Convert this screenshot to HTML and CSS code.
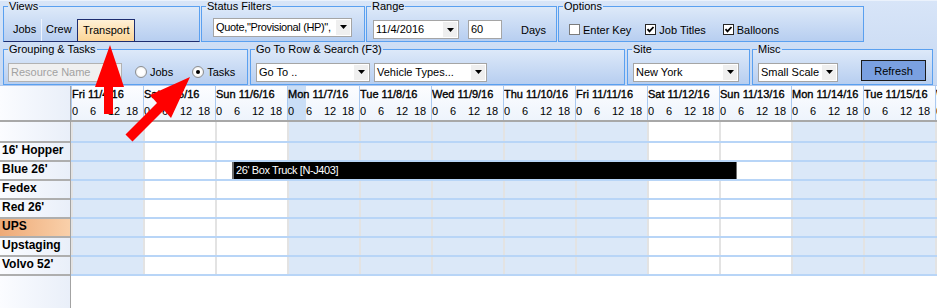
FILE: index.html
```html
<!DOCTYPE html>
<html lang="en">
<head>
  <meta charset="UTF-8">
  <title>Transport Schedule</title>
  <link rel="stylesheet" href="styles.css">
</head>
<body>

  <!-- Filter toolbar -->
  <div class="toolbar">
    <div class="bar-row top">
      <fieldset class="grp views">
        <legend>Views</legend>
        <div class="tabs">
          <span class="tab">Jobs</span>
          <span class="tab">Crew</span>
          <span class="tab active">Transport</span>
        </div>
      </fieldset>

      <fieldset class="grp status">
        <legend>Status Filters</legend>
        <div class="combo status-combo">
          <span class="val">Quote,"Provisional (HP)",</span>
          <span class="drop"><svg width="7" height="4" viewBox="0 0 7 4"><path d="M0 0h7L3.5 4z"/></svg></span>
        </div>
      </fieldset>

      <fieldset class="grp range low">
        <legend>Range</legend>
        <div class="combo date-combo">
          <span class="val">11/4/2016</span>
          <span class="drop"><svg width="7" height="4" viewBox="0 0 7 4"><path d="M0 0h7L3.5 4z"/></svg></span>
        </div>
        <div class="num">60</div>
        <span class="days-lbl">Days</span>
      </fieldset>

      <fieldset class="grp options low">
        <legend>Options</legend>
        <span class="cb first"></span><span class="cb-lbl">Enter Key</span>
        <span class="cb on"><svg width="9" height="9" viewBox="0 0 9 9"><path d="M1.5 4.2l2 2.2 4-4.4" fill="none" stroke="#000" stroke-width="1.8"/></svg></span><span class="cb-lbl">Job Titles</span>
        <span class="cb on balloons"><svg width="9" height="9" viewBox="0 0 9 9"><path d="M1.5 4.2l2 2.2 4-4.4" fill="none" stroke="#000" stroke-width="1.8"/></svg></span><span class="cb-lbl">Balloons</span>
      </fieldset>
    </div>

    <div class="bar-row bottom">
      <fieldset class="grp grouping">
        <legend>Grouping &amp; Tasks</legend>
        <div class="text-in">Resource Name</div>
        <span class="radio jobs-radio"></span><span class="radio-lbl">Jobs</span>
        <span class="radio on tasks-radio"></span><span class="radio-lbl">Tasks</span>
      </fieldset>

      <fieldset class="grp goto">
        <legend>Go To Row &amp; Search (F3)</legend>
        <div class="combo goto-combo">
          <span class="val">Go To ..</span>
          <span class="drop"><svg width="7" height="4" viewBox="0 0 7 4"><path d="M0 0h7L3.5 4z"/></svg></span>
        </div>
        <div class="combo vehicle-combo">
          <span class="val">Vehicle Types...</span>
          <span class="drop"><svg width="7" height="4" viewBox="0 0 7 4"><path d="M0 0h7L3.5 4z"/></svg></span>
        </div>
      </fieldset>

      <fieldset class="grp site">
        <legend>Site</legend>
        <div class="combo site-combo">
          <span class="val">New York</span>
          <span class="drop"><svg width="7" height="4" viewBox="0 0 7 4"><path d="M0 0h7L3.5 4z"/></svg></span>
        </div>
      </fieldset>

      <fieldset class="grp misc">
        <legend>Misc</legend>
        <div class="combo scale-combo">
          <span class="val">Small Scale</span>
          <span class="drop"><svg width="7" height="4" viewBox="0 0 7 4"><path d="M0 0h7L3.5 4z"/></svg></span>
        </div>
        <button class="refresh">Refresh</button>
      </fieldset>
    </div>
  </div>

  <!-- Schedule grid -->
  <div class="schedule">
    <div class="side">
      <div class="side-head"></div>
      <div class="side-row first"></div>
      <div class="side-row">16' Hopper</div>
      <div class="side-row">Blue 26'</div>
      <div class="side-row">Fedex</div>
      <div class="side-row">Red 26'</div>
      <div class="side-row picked">UPS</div>
      <div class="side-row">Upstaging</div>
      <div class="side-row">Volvo 52'</div>
    </div>

    <div class="timeline">
      <div class="days">
        <div class="day"><div class="date">Fri 11/4/16</div><div class="hours"><span>0</span><span>6</span><span>12</span><span>18</span></div></div>
        <div class="day"><div class="date">Sat 11/5/16</div><div class="hours"><span>0</span><span>6</span><span>12</span><span>18</span></div></div>
        <div class="day"><div class="date">Sun 11/6/16</div><div class="hours"><span>0</span><span>6</span><span>12</span><span>18</span></div></div>
        <div class="day"><div class="now"></div><div class="date">Mon 11/7/16</div><div class="hours"><span>0</span><span>6</span><span>12</span><span>18</span></div></div>
        <div class="day"><div class="date">Tue 11/8/16</div><div class="hours"><span>0</span><span>6</span><span>12</span><span>18</span></div></div>
        <div class="day"><div class="date">Wed 11/9/16</div><div class="hours"><span>0</span><span>6</span><span>12</span><span>18</span></div></div>
        <div class="day"><div class="date">Thu 11/10/16</div><div class="hours"><span>0</span><span>6</span><span>12</span><span>18</span></div></div>
        <div class="day"><div class="date">Fri 11/11/16</div><div class="hours"><span>0</span><span>6</span><span>12</span><span>18</span></div></div>
        <div class="day"><div class="date">Sat 11/12/16</div><div class="hours"><span>0</span><span>6</span><span>12</span><span>18</span></div></div>
        <div class="day"><div class="date">Sun 11/13/16</div><div class="hours"><span>0</span><span>6</span><span>12</span><span>18</span></div></div>
        <div class="day"><div class="date">Mon 11/14/16</div><div class="hours"><span>0</span><span>6</span><span>12</span><span>18</span></div></div>
        <div class="day"><div class="date">Tue 11/15/16</div><div class="hours"><span>0</span><span>6</span><span>12</span><span>18</span></div></div>
        <div class="day"><div class="date">Wed 11/16/16</div><div class="hours"><span>0</span><span>6</span><span>12</span><span>18</span></div></div>
      </div>

      <div class="lanes">
        <div class="lane first"></div>
        <div class="lane"></div>
        <div class="lane"><div class="booking">26' Box Truck [N-J403]</div></div>
        <div class="lane"></div>
        <div class="lane"></div>
        <div class="lane"></div>
        <div class="lane"></div>
        <div class="lane"></div>
      </div>
    </div>
  </div>

  <!-- Red callout arrows -->
  <svg class="arrows" width="937" height="308" viewBox="0 0 937 308">
    <polygon points="110,45 124,87 113,87 113,114 104,114 104,87 95,87"/>
    <polygon points="190,77 171,118 164,110 132.5,141.5 125.5,134.5 157,103 150,95"/>
  </svg>

</body>
</html>
```

FILE: styles.css
```css
body {
  margin: 0;
  width: 937px;
  height: 308px;
  overflow: hidden;
  position: relative;
  background: #fff;
  color: #000;
  font-family: "Liberation Sans", Arial, sans-serif;
  font-size: 11px;
}

/* toolbar */

.toolbar {
  height: 85px;
  background: linear-gradient(#d8e5f8, #c6d8f2);
  border-bottom: 1px solid #afc8ee;
  box-shadow: inset 0 1px #ebf2fc;
}

.bar-row {
  display: flex;
  padding-left: 3px;
}

.bar-row.top {
  gap: 1px;
}

.bar-row.bottom {
  gap: 2px;
  margin-top: 1px;
}

.grp {
  box-sizing: border-box;
  height: 42px;
  margin: 0;
  padding: 0 4px 0 4px;
  min-width: 0;
  border: 1px solid #5aa0f0;
  background: linear-gradient(#dde9f9, #b7cef0);
  display: flex;
  align-items: center;
}

.grp legend {
  padding: 0 1px;
  line-height: 13px;
  font-size: 11px;
}

.bar-row.bottom .grp {
  padding-top: 4px;
}

.grp.low {
  padding-top: 5px;
}

.views { width: 197px; align-items: flex-end; border-bottom-color: #1d2d70; }
.status { width: 164px; }
.range { width: 191px; }
.options { width: 306px; }
.grouping { width: 245px; }
.goto { width: 375px; }
.site { width: 123px; }
.misc { width: 181px; }

/* view tabs */

.tabs {
  display: flex;
  height: 22px;
  margin-left: 1px;
}

.tab {
  line-height: 21px;
  padding: 0 4px;
  box-sizing: border-box;
}

.tab:first-child {
  width: 33px;
  border-right: 1px solid #eef4fd;
}

.tab:nth-child(2) {
  width: 35px;
}

.tab.active {
  width: 58px;
  padding-left: 5px;
  border: 1px solid #1d2d70;
  border-bottom: none;
  line-height: 20px;
  background: linear-gradient(#fff1d6, #fcd597);
}

/* combos and inputs */

.combo {
  display: flex;
  box-sizing: border-box;
  height: 19px;
  border: 1px solid #a5a5a5;
  background: #fff;
}

.combo .val {
  flex: 1;
  padding-left: 2px;
  line-height: 17px;
  white-space: nowrap;
  overflow: hidden;
}

.combo .drop {
  width: 14px;
  margin: 1px;
  background: #efefef;
  display: flex;
  align-items: center;
  justify-content: center;
}

.status-combo { width: 139px; margin-left: 7px; }
.status-combo .val { letter-spacing: -0.35px; }
.date-combo { width: 86px; margin-left: 2px; }
.goto-combo { width: 114px; margin-left: 1px; }
.vehicle-combo { width: 113px; margin-left: 4px; }
.site-combo { width: 106px; margin-left: 1px; }
.scale-combo { width: 80px; margin-left: 1px; }

.num {
  box-sizing: border-box;
  width: 34px;
  height: 19px;
  margin-left: 9px;
  border: 1px solid #a5a5a5;
  background: #fff;
  padding-left: 2px;
  line-height: 17px;
}

.days-lbl {
  margin-left: 19px;
}

.text-in {
  box-sizing: border-box;
  width: 114px;
  height: 19px;
  border: 1px solid #b2b2b2;
  background: #f0f0f0;
  color: #a2a2a2;
  padding-left: 2px;
  line-height: 17px;
}

/* checkboxes and radios */

.cb {
  box-sizing: border-box;
  width: 11px;
  height: 11px;
  border: 1px solid #262626;
  background: #fff;
  display: flex;
  align-items: center;
  justify-content: center;
  margin-left: 14px;
}

.cb.first {
  margin-left: 6px;
  border-color: #7c7c7c;
}

.cb.balloons {
  margin-left: 17px;
}

.cb-lbl {
  margin-left: 3px;
}

.radio {
  box-sizing: border-box;
  width: 12px;
  height: 12px;
  border-radius: 50%;
  border: 1px solid #8d8f91;
  background: radial-gradient(#fff 45%, #dcdcdc);
  display: flex;
  align-items: center;
  justify-content: center;
}

.radio.on::after {
  content: "";
  width: 4px;
  height: 4px;
  border-radius: 50%;
  background: #000;
}

.jobs-radio { margin-left: 13px; }
.tasks-radio { margin-left: 19px; }

.radio-lbl {
  margin-left: 3px;
}

.refresh {
  align-self: flex-start;
  box-sizing: border-box;
  width: 65px;
  height: 21px;
  margin-left: 23px;
  border: 1px solid #1b1b1b;
  background: #7aa0e0;
  font-family: inherit;
  font-size: 11px;
  color: #000;
  padding: 0;
}

/* schedule grid */

.schedule {
  display: flex;
  height: 222px;
}

.side {
  box-sizing: border-box;
  width: 71px;
  flex: none;
  border-right: 1px solid #a3a3a3;
  background: linear-gradient(to right, #fbfcff, #e9eff9);
}

.side-head {
  box-sizing: border-box;
  height: 36px;
  border-bottom: 2px solid #a8a8a8;
}

.side-row {
  box-sizing: border-box;
  height: 19px;
  border-bottom: 2px solid #aeaeae;
  padding-left: 2px;
  font-size: 12px;
  font-weight: bold;
  line-height: 15px;
  white-space: nowrap;
}

.side-row.first {
  height: 21px;
}

.side-row.picked {
  background: linear-gradient(to right, #eeaa77, #f9d0aa);
}

.timeline {
  flex: 1;
  min-width: 0;
  overflow: hidden;
}

.days {
  display: flex;
  box-sizing: border-box;
  height: 36px;
  border-bottom: 2px solid #a8a8a8;
}

.day {
  flex: 0 0 72px;
  min-width: 0;
  box-sizing: border-box;
  position: relative;
  overflow: hidden;
  border-left: 1px solid #abc9ef;
  background: linear-gradient(#fcfdff, #eef4fc);
}

.day .now {
  position: absolute;
  left: 0;
  top: 0;
  bottom: 0;
  width: 18px;
  background: #cadef6;
}

.date {
  position: relative;
  height: 17px;
  line-height: 17px;
  -webkit-text-stroke: 0.35px #000;
  white-space: nowrap;
}

.hours {
  position: relative;
  display: flex;
  line-height: 17px;
}

.hours span {
  width: 18px;
  flex: none;
}

.lanes {
  background-color: #fff;
  background-image:
    repeating-linear-gradient(to right, #e3e3e3 0 2px, transparent 2px 72px),
    repeating-linear-gradient(to right, #dbe8f8 0 72px, #fff 72px 216px, #dbe8f8 216px 504px);
}

.lane {
  box-sizing: border-box;
  position: relative;
  height: 19px;
  border-bottom: 2px solid #b8d5f7;
}

.lane.first {
  height: 21px;
}

.booking {
  position: absolute;
  left: 161px;
  top: 0;
  box-sizing: border-box;
  width: 505px;
  height: 17px;
  padding-left: 2px;
  background: #000;
  border-left: 2px solid #6e6e6e;
  border-right: 1px solid #6e6e6e;
  color: #fff;
  font-size: 11px;
  letter-spacing: -0.4px;
  line-height: 17px;
  white-space: nowrap;
}

.arrows {
  position: absolute;
  left: 0;
  top: 0;
  pointer-events: none;
  fill: #f00;
}
```
